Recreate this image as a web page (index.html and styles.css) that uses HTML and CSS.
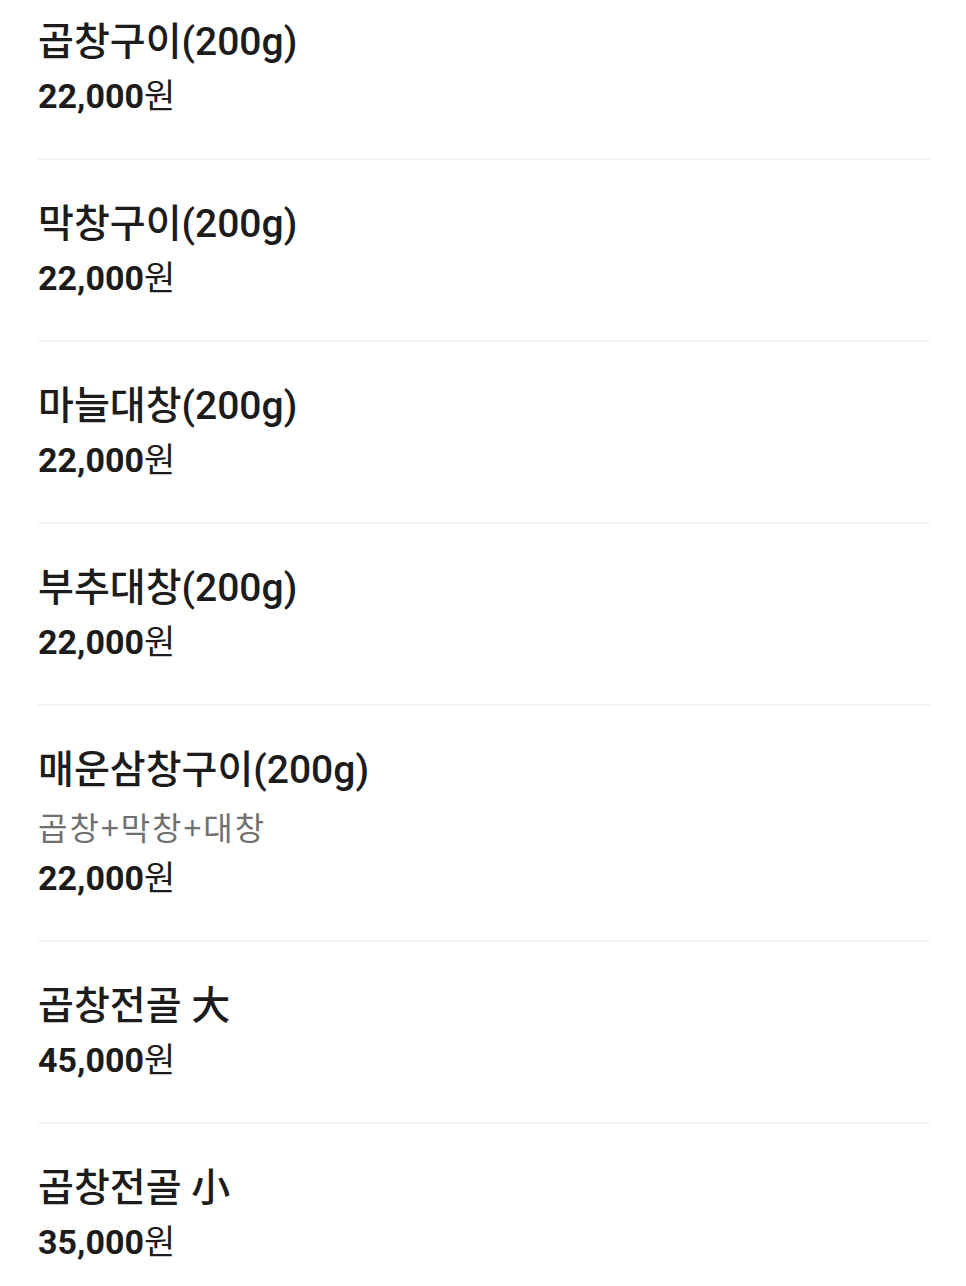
FILE: index.html
```html
<!DOCTYPE html>
<html lang="ko">
<head>
<meta charset="utf-8">
<title>메뉴</title>
<link rel="stylesheet" href="styles.css">
</head>
<body>
<ul class="menu">
  <li class="item">
    <div class="name">곱창구이(200g)</div>
    <div class="price">22,000<span class="won">원</span></div>
  </li>
  <li class="item">
    <div class="name">막창구이(200g)</div>
    <div class="price">22,000<span class="won">원</span></div>
  </li>
  <li class="item">
    <div class="name">마늘대창(200g)</div>
    <div class="price">22,000<span class="won">원</span></div>
  </li>
  <li class="item">
    <div class="name">부추대창(200g)</div>
    <div class="price">22,000<span class="won">원</span></div>
  </li>
  <li class="item">
    <div class="name">매운삼창구이(200g)</div>
    <div class="desc">곱창+막창+대창</div>
    <div class="price">22,000<span class="won">원</span></div>
  </li>
  <li class="item">
    <div class="name">곱창전골 大</div>
    <div class="price">45,000<span class="won">원</span></div>
  </li>
  <li class="item">
    <div class="name">곱창전골 小</div>
    <div class="price">35,000<span class="won">원</span></div>
  </li>
</ul>
</body>
</html>
```
FILE: styles.css
```css
html, body {
  margin: 0;
  padding: 0;
  background: #ffffff;
}
body {
  font-family: Roboto, "Noto Sans CJK KR", sans-serif;
  color: #1c1c1c;
}
.menu {
  list-style: none;
  margin: 0;
  padding: 0 36px 0 38px;
}
.item {
  padding: 37px 0 35px;
  border-bottom: 2px solid #f2f2f2;
}
.item:first-child {
  padding-top: 15px;
}
.item:last-child {
  border-bottom: none;
}
.name {
  font-size: 39px;
  font-weight: 500;
  line-height: 54px;
}
.desc {
  margin-top: 4px;
  font-family: "Noto Sans CJK KR", sans-serif;
  font-size: 32px;
  font-weight: 400;
  line-height: 50px;
  letter-spacing: 2px;
  color: #707070;
}
.price {
  font-size: 34px;
  font-weight: 700;
  line-height: 54px;
}
.won {
  font-weight: 400;
}
```
